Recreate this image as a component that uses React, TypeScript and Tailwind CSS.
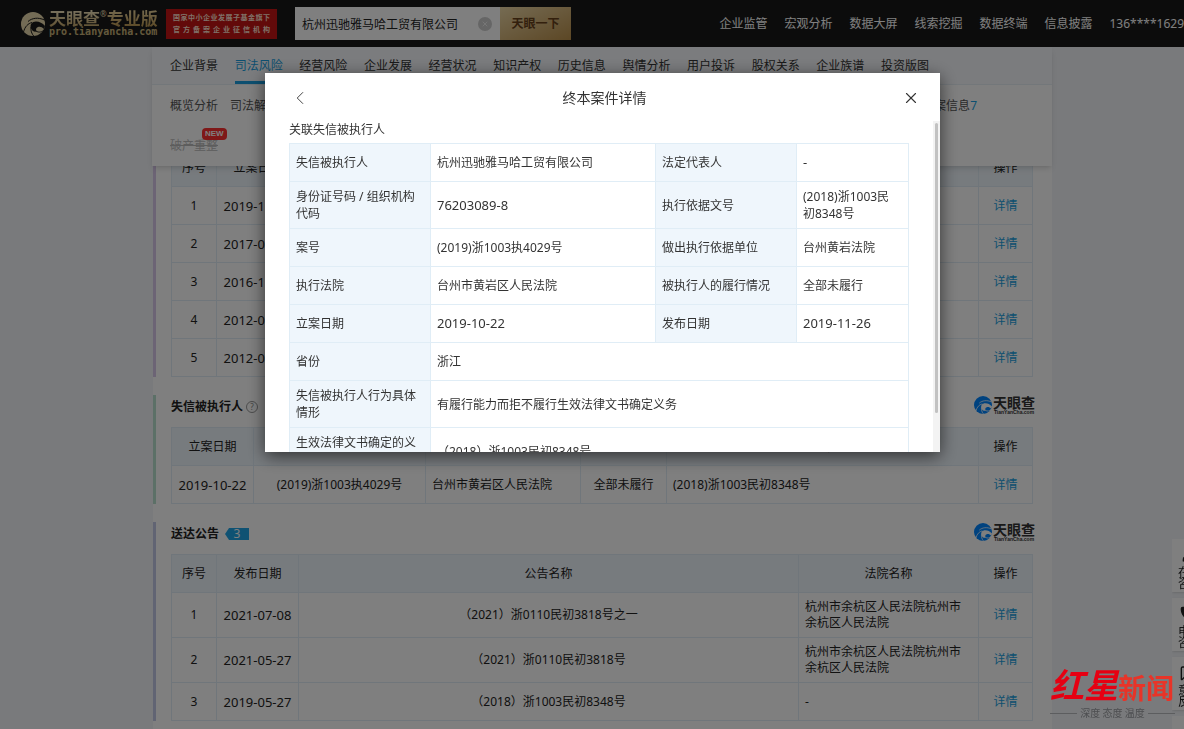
import { useId, type ReactNode } from 'react'
import { ChevronLeft, MessageSquareText, Phone, User, X } from 'lucide-react'

interface Notice {
  id: number
  date: string
  title: string
  court: string
}

const headerLinks = ['企业监管', '宏观分析', '数据大屏', '线索挖掘', '数据终端', '信息披露']

const tabs = [
  '企业背景',
  '司法风险',
  '经营风险',
  '企业发展',
  '经营状况',
  '知识产权',
  '历史信息',
  '舆情分析',
  '用户投诉',
  '股权关系',
  '企业族谱',
  '投资版图',
]

const finalCases = ['2019-10-22', '2017-06-14', '2016-11-03', '2012-08-21', '2012-05-09']

const notices: Notice[] = [
  { id: 1, date: '2021-07-08', title: '（2021）浙0110民初3818号之一', court: '杭州市余杭区人民法院杭州市余杭区人民法院' },
  { id: 2, date: '2021-05-27', title: '（2021）浙0110民初3818号', court: '杭州市余杭区人民法院杭州市余杭区人民法院' },
  { id: 3, date: '2019-05-27', title: '（2018）浙1003民初8348号', court: '-' },
]

const pairedRows = [
  ['失信被执行人', '杭州迅驰雅马哈工贸有限公司', '法定代表人', '-'],
  ['身份证号码 / 组织机构代码', '76203089-8', '执行依据文号', '(2018)浙1003民初8348号'],
  ['案号', '(2019)浙1003执4029号', '做出执行依据单位', '台州黄岩法院'],
  ['执行法院', '台州市黄岩区人民法院', '被执行人的履行情况', '全部未履行'],
  ['立案日期', '2019-10-22', '发布日期', '2019-11-26'],
]

const wideRows = [
  ['省份', '浙江'],
  ['失信被执行人行为具体情形', '有履行能力而拒不履行生效法律文书确定义务'],
  ['生效法律文书确定的义务', '（2018）浙1003民初8348号'],
]

// values made only of digits and dashes are set one size up
const isNumeric = (value: string) => /^[\d-]+$/.test(value)

function Swirl({ className }: { className: string }) {
  const maskId = useId()
  return (
    <svg viewBox="0 0 24 24" className={className} aria-hidden="true">
      <mask id={maskId}>
        <circle cx="12" cy="12" r="12" fill="#fff" />
        <path d="M10 16.500C8.500 12.500 11 9.500 15 9.500c3.500 0 6.500 1.500 9 4.500l-1 3c-2-2-4-2.700-6-2-2 .8-2.500 2.500-1.500 4.500C13 20 11 19 10 16.500Z" fill="#000" />
        <g fill="none" stroke="#000" strokeWidth="1">
          <path d="M11 10.500C7 11.500 4 14.500 2.500 20" />
          <path d="M10 15C9.500 18.500 10.500 21.500 13 24.500" />
          <path d="M7 9.500C11 6 17 5 23.500 8" />
          <path d="M15 19C18 21 21 20 23 18" />
        </g>
      </mask>
      <rect width="24" height="24" fill="currentColor" mask={`url(#${maskId})`} />
    </svg>
  )
}

function TableLogo() {
  return (
    <div className="-mr-0.5 flex items-center gap-px">
      <Swirl className="size-[18px] text-[#0084ff]" />
      <div className="flex flex-col items-center text-[#333]">
        <span className="text-[14px] leading-[15px] font-bold">天眼查</span>
        <span className="font-['Liberation_Sans'] text-[5px] leading-[5px] font-bold">TianYanCha.com</span>
      </div>
    </div>
  )
}

function Section({ title, badge, accent, children }: { title?: ReactNode; badge?: ReactNode; accent: string; children: ReactNode }) {
  return (
    <section className={`border-l-[3px] pl-[15px] pr-[19px] ${accent}`}>
      {title && (
        <div className="flex h-8 items-start justify-between">
          <div className="flex h-6 items-center">
            <h2 className="text-xs font-bold text-[#222]">{title}</h2>
            {badge}
          </div>
          <TableLogo />
        </div>
      )}
      {children}
    </section>
  )
}

function Th({ className = '', children }: { className?: string; children?: ReactNode }) {
  return <th className={`h-[38px] border border-[#e0edf6] bg-[#eff6fc] font-normal ${className}`}>{children}</th>
}

function Td({ className = '', children }: { className?: string; children?: ReactNode }) {
  return <td className={`h-[38px] border border-[#e0edf6] px-1.5 ${className}`}>{children}</td>
}

function DetailLink() {
  return (
    <a href="#detail" className="text-[#1a9fe0]">
      详情
    </a>
  )
}

function Header() {
  return (
    <header className="flex h-[47px] items-center bg-[#191919] text-xs whitespace-nowrap">
      <a href="#home" className="ml-[21px] flex w-[139px] shrink-0 items-center gap-1 text-[#e9d9ac]">
        <Swirl className="size-6 shrink-0" />
        <span className="flex flex-col">
          <span className="flex items-start text-[17px] leading-[17px] font-bold">
            <span className="bg-linear-to-b from-[#f2e5c0] to-[#c3a567] bg-clip-text text-transparent">天眼查</span>
            <span className="text-[8px] leading-[8px] font-normal">®</span>
            <span className="bg-linear-to-b from-[#e9d39c] to-[#b9954f] bg-clip-text text-transparent">专业版</span>
          </span>
          <span className="font-['DejaVu_Sans_Mono'] text-[10px] leading-[10px] font-bold text-[#c9b278]">pro.tianyancha.com</span>
        </span>
      </a>
      <div className="ml-1.5 flex h-[30px] w-[111px] shrink-0 flex-col justify-center gap-1 bg-[#c41414] px-[7px] text-[7px] leading-[8px] font-bold text-[#ffe0d0] [text-align-last:justify]">
        <span>国家中小企业发展子基金旗下</span>
        <span>官方备案企业征信机构</span>
      </div>
      <form className="ml-[18px] flex h-[33px] shrink-0" onSubmit={(e) => e.preventDefault()}>
        <div className="flex w-[205px] items-center bg-white pr-2">
          <input
            aria-label="企业名称"
            defaultValue="杭州迅驰雅马哈工贸有限公司"
            className="h-full w-full min-w-0 pl-[7px] text-[#222] outline-none"
          />
          <button type="button" aria-label="清空" className="flex size-[14px] shrink-0 items-center justify-center rounded-full bg-[#ccc] text-white">
            <X size={8} />
          </button>
        </div>
        <button className="w-[71px] bg-linear-to-br from-[#ebd7a6] to-[#b98f4a] font-bold text-[#66401a]">天眼一下</button>
      </form>
      <nav className="ml-auto flex gap-[17px] text-white">
        {headerLinks.map((link) => (
          <a key={link} href="#nav">
            {link}
          </a>
        ))}
        <a href="#account">136****1629</a>
      </nav>
    </header>
  )
}

function CompanyNav() {
  return (
    <div className="relative z-10 mr-[132px] ml-[152px] bg-white text-xs shadow-md">
      <nav className="flex h-[38px] justify-between border-b border-[#e6eef5] bg-[#f7f9fc] pr-[123px] pl-[18px] whitespace-nowrap text-[#333]">
        {tabs.map((tab) => (
          <a
            key={tab}
            href="#tab"
            className={`flex items-center border-b-[3px] pt-1 ${tab === '司法风险' ? 'border-[#1a9fe0] text-[#1a9fe0]' : 'border-transparent'}`}
          >
            {tab}
          </a>
        ))}
      </nav>
      <div className="h-[81px] pt-[13px] pr-[75px] pl-[18px] text-[#555]">
        <div className="flex gap-3 leading-4">
          <a href="#overview">概览分析</a>
          <a href="#judicial">司法解析</a>
          <a href="#filing" className="ml-auto">
            立案信息<span className="text-[#1a9fe0]">7</span>
          </a>
        </div>
        <div className="mt-6 flex leading-4">
          <span className="relative text-[#bbb] line-through">
            破产重整
            <span className="absolute -top-2.5 left-8 inline-block rounded-sm bg-[#ff3030] px-[3px] font-['Liberation_Sans'] text-[8px] leading-3 font-bold text-white">
              NEW
            </span>
          </span>
        </div>
      </div>
    </div>
  )
}

function CaseDialog() {
  return (
    <div role="dialog" aria-label="终本案件详情" className="flex h-[52vh] w-[675px] flex-col bg-white text-[#333] shadow-[0_4px_16px_rgba(0,0,0,0.6)]">
      <div className="flex h-12 shrink-0 items-center justify-between px-6 pt-0.5">
        <button aria-label="返回">
          <ChevronLeft size={22} strokeWidth={1} />
        </button>
        <h1 className="text-sm">终本案件详情</h1>
        <button aria-label="关闭" className="-mr-2 px-1">
          <X size={18} strokeWidth={1.5} />
        </button>
      </div>
      <div className="flex min-h-0 flex-1">
        <div className="flex-1 overflow-hidden pl-6 text-xs">
          <h2 className="mb-[5px] pt-px leading-4">关联失信被执行人</h2>
          <table className="w-[620px] table-fixed border-collapse text-left leading-[17px]">
            <colgroup>
              <col className="w-[141px]" />
              <col className="w-[225px]" />
              <col className="w-[141px]" />
              <col />
            </colgroup>
            <tbody>
              {pairedRows.map(([nameA, valueA, nameB, valueB]) => (
                <tr key={nameA}>
                  <Th className="px-1.5 py-1.5">{nameA}</Th>
                  <Td className={isNumeric(valueA) ? 'text-[13px]' : 'py-1.5'}>{valueA}</Td>
                  <Th className="px-1.5 py-1.5">{nameB}</Th>
                  <Td className={isNumeric(valueB) ? 'text-[13px]' : 'py-1.5 pr-3'}>{valueB}</Td>
                </tr>
              ))}
              {wideRows.map(([name, value]) => (
                <tr key={name}>
                  <Th className="px-1.5 py-1.5">{name}</Th>
                  <td colSpan={3} className="h-[38px] border border-[#e0edf6] px-1.5 py-1.5">
                    {value}
                  </td>
                </tr>
              ))}
            </tbody>
          </table>
        </div>
        <div className="w-[7px] shrink-0 bg-[#f3f3f3] px-0.5 pt-0.5">
          <div className="h-[88%] rounded-full bg-[#c2c2c2]" />
        </div>
      </div>
    </div>
  )
}

function SideTools() {
  const tools = [
    { icon: <User size={16} fill="currentColor" />, top: '在线', bottom: '咨询' },
    { icon: <Phone size={16} fill="currentColor" />, top: '电话', bottom: '咨询' },
    { icon: <MessageSquareText size={16} />, top: '意见', bottom: '反馈' },
  ]
  return (
    <aside className="fixed top-[539px] right-0 flex w-3 flex-col gap-1.5 overflow-hidden">
      {tools.map((tool) => (
        <button
          key={tool.top}
          className="flex h-[53px] w-10 flex-col items-start bg-white pt-2 pl-1.5 text-xs leading-[11px] whitespace-nowrap text-[#222] shadow"
        >
          <span className="mb-1 ml-0.5">{tool.icon}</span>
          <span>{tool.top}</span>
          <span>{tool.bottom}</span>
        </button>
      ))}
      <div className="h-4 w-10 bg-white" />
    </aside>
  )
}

function Watermark() {
  return (
    <div className="fixed right-[9px] bottom-2.5 z-50 w-[125px] font-['Noto_Sans_CJK_SC',sans-serif]">
      <div className="mb-0.5 flex items-end whitespace-nowrap">
        <span className="text-[34px] leading-[42px] font-bold text-[#e60012] italic">红星</span>
        <span className="text-[28px] leading-9 font-bold text-[#e83428]">新闻</span>
      </div>
      <div className="flex items-center gap-[3px] text-[10px] leading-3 whitespace-nowrap text-[#4c4d4f]">
        <span className="h-px flex-1 bg-[#5c5d5f]" />
        深度 态度 温度
        <span className="h-px flex-1 bg-[#5c5d5f]" />
      </div>
    </div>
  )
}

export default function App() {
  return (
    <div className="min-h-screen overflow-hidden bg-[#f2f4f8] font-['Noto_Sans','Noto_Sans_CJK_SC',sans-serif] text-[#222]">
      <Header />
      <CompanyNav />
      <main className="-mt-[18px] mr-[132px] ml-[153px] flex flex-col gap-[18px] bg-white pb-[9px] text-xs leading-4">
        <Section accent="border-[#d9c8ea]">
          <table className="w-full table-fixed border-collapse text-center">
            <thead>
              <tr>
                <Th className="w-[45px]">序号</Th>
                <Th className="w-[82px]">立案日期</Th>
                <Th>案号</Th>
                <Th className="w-[54px]">操作</Th>
              </tr>
            </thead>
            <tbody>
              {finalCases.map((date, i) => (
                <tr key={date}>
                  <Td>{i + 1}</Td>
                  <Td className="text-[13px]">{date}</Td>
                  <Td />
                  <Td>
                    <DetailLink />
                  </Td>
                </tr>
              ))}
            </tbody>
          </table>
        </Section>

        <Section
          title="失信被执行人"
          accent="border-[#b8e0cf]"
          badge={
            <button aria-label="说明" className="ml-[3px] size-3 rounded-full border border-[#999] text-[8px] leading-[10px] text-[#888]">
              ?
            </button>
          }
        >
          <table className="w-full table-fixed border-collapse text-center">
            <thead>
              <tr>
                <Th className="w-[82px]">立案日期</Th>
                <Th className="w-[172px]">案号</Th>
                <Th className="w-[155px]">执行法院</Th>
                <Th className="w-[86px]">履行状态</Th>
                <Th>执行依据文号</Th>
                <Th className="w-[54px]">操作</Th>
              </tr>
            </thead>
            <tbody>
              <tr>
                <Td className="text-[13px]">2019-10-22</Td>
                <Td>(2019)浙1003执4029号</Td>
                <Td className="text-left">台州市黄岩区人民法院</Td>
                <Td>全部未履行</Td>
                <Td className="text-left">(2018)浙1003民初8348号</Td>
                <Td>
                  <DetailLink />
                </Td>
              </tr>
            </tbody>
          </table>
        </Section>

        <Section
          title="送达公告"
          accent="border-[#c3c9e6]"
          badge={
            <span className="ml-1.5 flex h-3 w-6 items-center justify-center bg-[#1fa5e6] text-xs leading-3 text-white [clip-path:polygon(4px_0,100%_0,100%_100%,4px_100%,0_50%)]">
              3
            </span>
          }
        >
          <table className="w-full table-fixed border-collapse text-center">
            <thead>
              <tr>
                <Th className="w-[45px]">序号</Th>
                <Th className="w-[82px]">发布日期</Th>
                <Th>公告名称</Th>
                <Th className="w-[180px]">法院名称</Th>
                <Th className="w-[54px]">操作</Th>
              </tr>
            </thead>
            <tbody>
              {notices.map((notice) => (
                <tr key={notice.id}>
                  <Td>{notice.id}</Td>
                  <Td className="text-[13px]">{notice.date}</Td>
                  <Td>{notice.title}</Td>
                  <Td className="py-1.5 text-left">{notice.court}</Td>
                  <Td>
                    <DetailLink />
                  </Td>
                </tr>
              ))}
            </tbody>
          </table>
        </Section>
      </main>
      <SideTools />

      <div className="fixed inset-0 z-40 flex items-start justify-center bg-black/50 pt-[73px] pl-[21px]">
        <CaseDialog />
      </div>
      <Watermark />
    </div>
  )
}
